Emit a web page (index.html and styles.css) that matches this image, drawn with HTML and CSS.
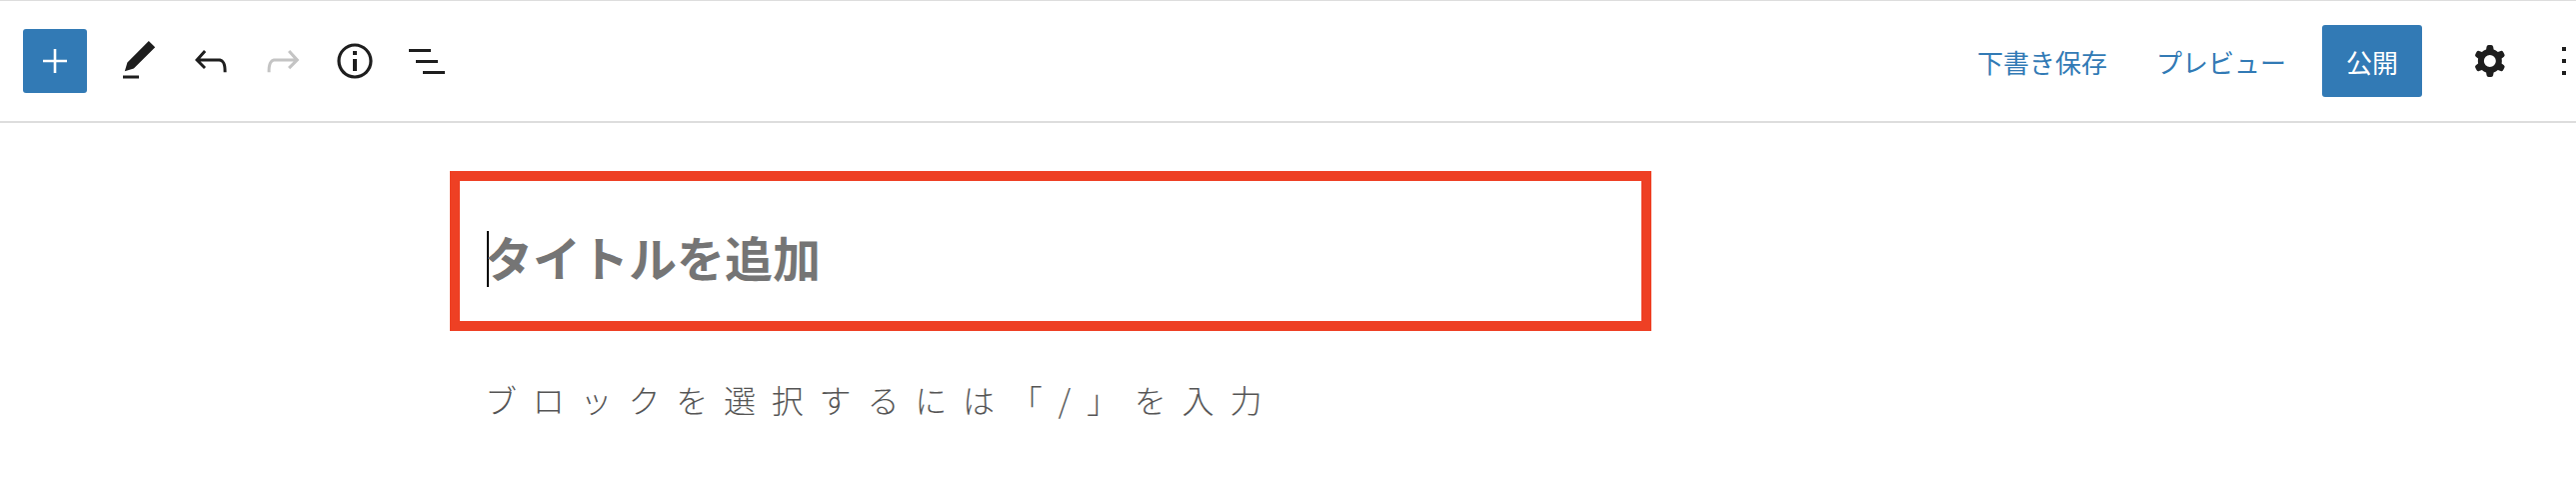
FILE: index.html
```html
<!DOCTYPE html>
<html lang="ja">
<head>
    <meta charset="UTF-8">
    <meta name="viewport" content="width=device-width, initial-scale=1.0">
    <title>新規投稿</title>
    <link rel="stylesheet" href="styles.css">
</head>
<body>
<!-- Editor top toolbar -->
<header class="toolbar">
    <div class="tools-left">
        <button class="add-block" aria-label="ブロックを追加">
            <svg viewBox="0 0 24 24" width="24" height="24"><path d="M10.7 0h2.6v10.7H24v2.6H13.3V24h-2.6V13.3H0v-2.6h10.7z"/></svg>
        </button>
        <svg class="icon pen" viewBox="0 0 24 24"><path d="M20.1 5.1L16.9 2 6.2 12.7l-1.3 4.4 4.5-1.3L20.1 5.1zM4 20.8h8v-1.5H4v1.5z"/></svg>
        <svg class="icon" viewBox="0 0 24 24"><path d="M18.3 11.7c-.6-.6-1.4-.9-2.3-.9H6.7l2.9-3.3-1.1-1-4.5 5L8.5 16l1-1-2.7-2.7H16c.5 0 .9.2 1.3.5 1 1 1 3.4 1 4.5v.3h1.5v-.2c0-1.5 0-4.3-1.5-5.7z"/></svg>
        <svg class="icon disabled" viewBox="0 0 24 24"><path d="M15.6 6.5l-1.1 1 2.9 3.3H8c-.9 0-1.7.3-2.3.9-1.4 1.5-1.4 4.2-1.4 5.7v.2h1.5v-.3c0-1.1 0-3.5 1-4.5.3-.3.7-.5 1.3-.5h9.2L14.5 15l1.1 1.1 4.6-4.6-4.6-5z"/></svg>
        <svg class="icon" viewBox="0 0 24 24"><path d="M12 3.2c-4.8 0-8.8 3.9-8.8 8.8 0 4.8 3.9 8.8 8.8 8.8 4.8 0 8.8-3.9 8.8-8.8 0-4.8-4-8.8-8.8-8.8zm0 16c-4 0-7.2-3.3-7.2-7.2C4.8 8 8 4.8 12 4.8s7.2 3.3 7.2 7.2c0 4-3.2 7.2-7.2 7.2zM11 17h2v-6h-2v6zm0-8h2V7h-2v2z"/></svg>
        <svg class="icon" viewBox="0 0 24 24"><path d="M3 6h11v1.5H3V6zm3.5 5.5h11V13h-11v-1.5zM10 17h11v1.5H10V17z"/></svg>
    </div>
    <div class="tools-right">
        <a class="text-link draft" href="#">下書き保存</a>
        <a class="text-link preview" href="#">プレビュー</a>
        <button class="publish">公開</button>
        <svg class="icon gear" viewBox="0 0 24 24"><path fill-rule="evenodd" d="M10.289 4.836A1 1 0 0111.275 4h1.306a1 1 0 01.987.836l.244 1.466c.787.26 1.503.679 2.108 1.218l1.393-.522a1 1 0 011.216.437l.653 1.13a1 1 0 01-.23 1.273l-1.148.944a6.025 6.025 0 010 2.435l1.149.946a1 1 0 01.23 1.272l-.653 1.13a1 1 0 01-1.216.437l-1.394-.522c-.605.54-1.32.958-2.108 1.218l-.244 1.466a1 1 0 01-.987.836h-1.306a1 1 0 01-.986-.836l-.244-1.466a5.995 5.995 0 01-2.108-1.218l-1.394.522a1 1 0 01-1.217-.436l-.653-1.131a1 1 0 01.23-1.272l1.149-.946a6.026 6.026 0 010-2.435l-1.148-.944a1 1 0 01-.23-1.272l.653-1.131a1 1 0 011.217-.437l1.393.522a5.994 5.994 0 012.108-1.218l.244-1.466zM14.929 12a3 3 0 11-6 0 3 3 0 016 0z"/></svg>
        <svg class="more" viewBox="0 0 18 24"><path d="M13 19h-2v-2h2v2zm0-6h-2v-2h2v2zm0-6h-2V5h2v2z"/></svg>
    </div>
</header>

<!-- Post title and first block -->
<main class="editor">
    <div class="title-box">
        <span class="caret"></span>
        <h1 class="title-placeholder">タイトルを追加</h1>
    </div>
    <p class="block-hint">ブロックを選択するには「/」を入力</p>
</main>
</body>
</html>
```

FILE: styles.css
```css
html, body {
    height: 100%;
    margin: 0;
    overflow: hidden;
    background-color: #fff;
    font-family: "Noto Sans CJK JP", "Noto Sans", sans-serif;
}

/* Top toolbar */
.toolbar {
    height: 120px;
    display: flex;
    align-items: center;
    justify-content: space-between;
    border-top: 1px solid #ddd;
    border-bottom: 2px solid #ddd;
}

.tools-left {
    display: flex;
    align-items: center;
    gap: 24px;
    padding-left: 23px;
}

.tools-right {
    display: flex;
    align-items: center;
}

.icon {
    width: 48px;
    height: 48px;
    fill: #1e1e1e;
}

.icon.disabled {
    fill: #c4c4c4;
}

.add-block {
    width: 64px;
    height: 64px;
    margin-right: 4px;
    padding: 0;
    display: flex;
    align-items: center;
    justify-content: center;
    border: none;
    border-radius: 3px;
    background-color: #327ab5;
}

.add-block svg {
    fill: #fff;
}

.text-link {
    font-size: 26px;
    color: #327ab5;
    text-decoration: none;
}

.draft {
    margin-right: 49px;
}

.preview {
    margin-right: 36px;
}

.publish {
    width: 100px;
    height: 72px;
    padding: 0;
    border: none;
    border-radius: 3px;
    background-color: #327ab5;
    color: #fff;
    font-family: inherit;
    font-size: 26px;
}

.gear {
    margin-left: 44px;
}

.more {
    width: 36px;
    height: 48px;
    margin-left: 26px;
    fill: #1e1e1e;
}

/* Editor area */
.editor {
    padding: 48px 0 0 450px;
}

.title-box {
    box-sizing: border-box;
    width: 1202px;
    height: 160px;
    padding: 16px 0 0 27px;
    display: flex;
    align-items: center;
    border: 10px solid #ee4024;
}

.caret {
    width: 2px;
    height: 56px;
    background-color: #000;
}

.title-placeholder {
    margin: -7px 0 0 -4px;
    font-size: 48px;
    font-weight: 700;
    color: #757575;
}

.block-hint {
    margin: 45px 0 0 35px;
    font-size: 32px;
    font-weight: 300;
    letter-spacing: 15.8px;
    color: #555;
}
```
